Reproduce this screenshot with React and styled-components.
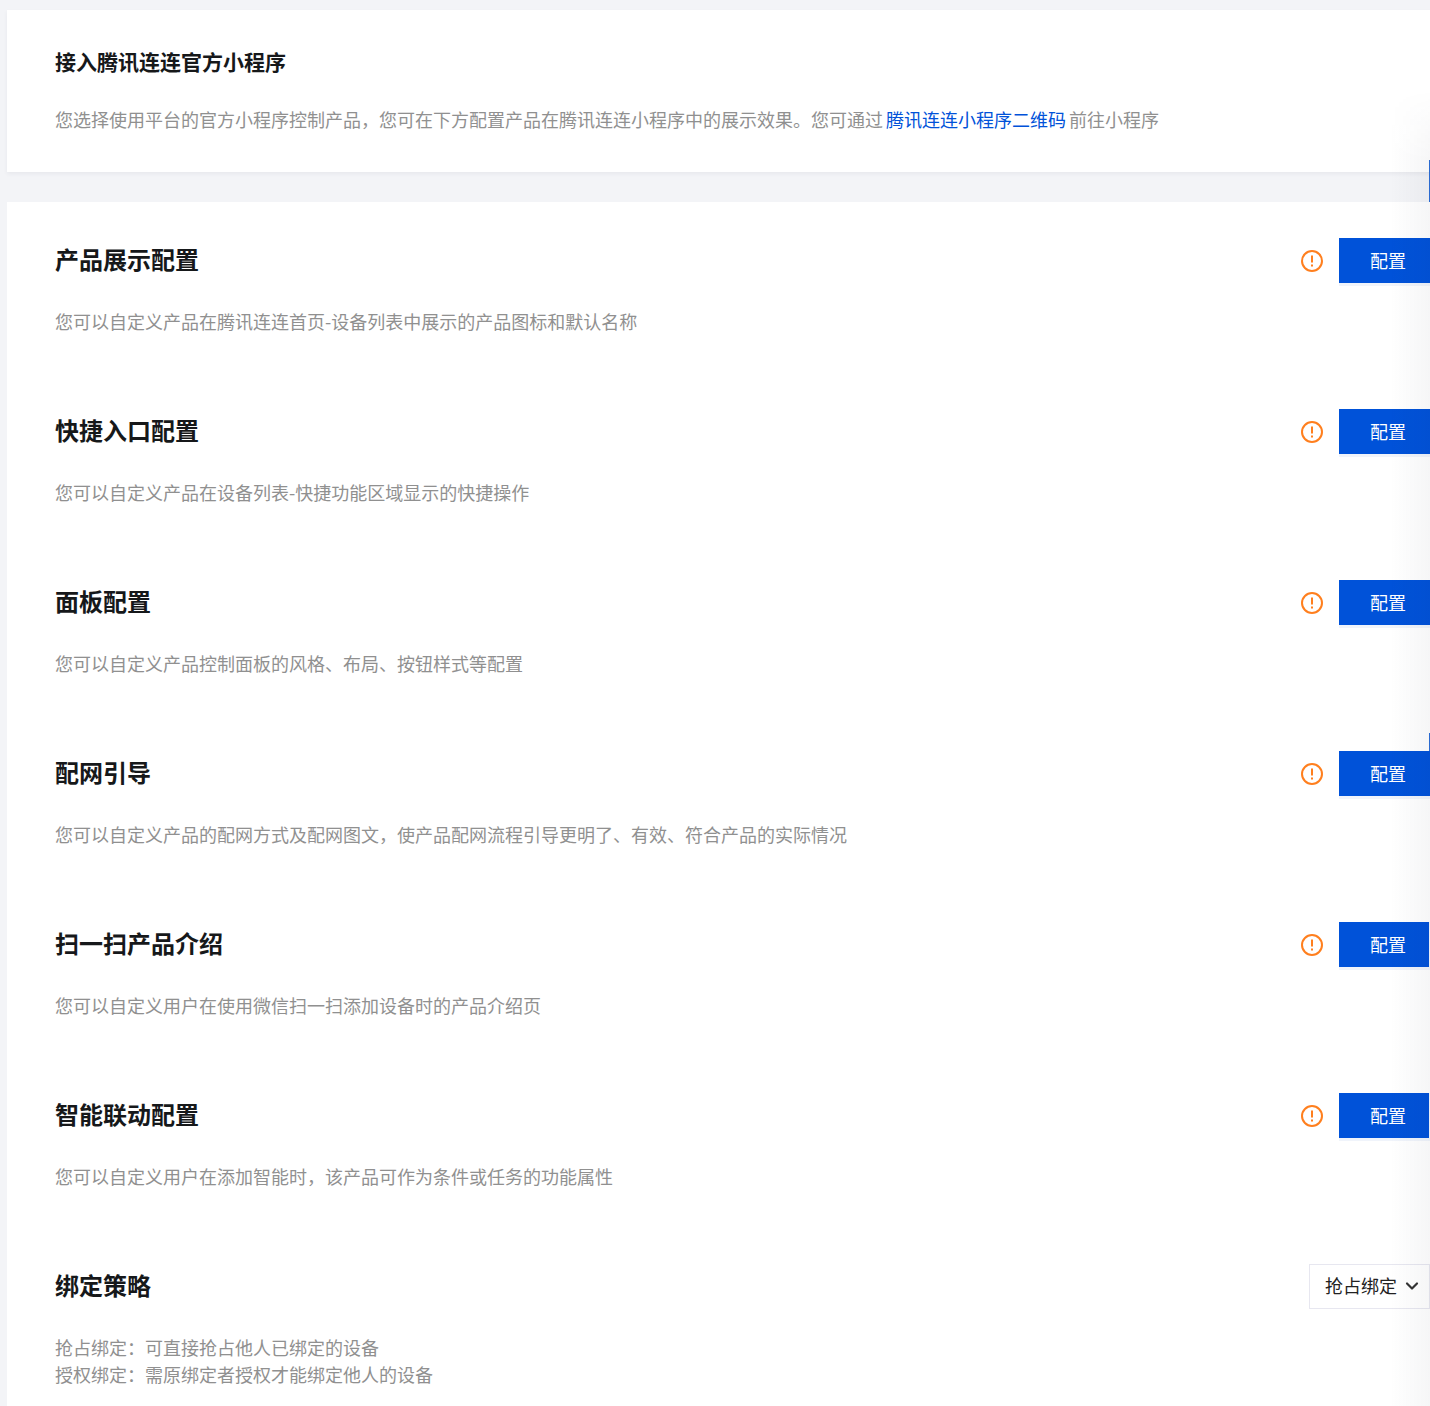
import styled, { createGlobalStyle } from "styled-components"
import { ChevronDown } from "lucide-react"

const GlobalStyle = createGlobalStyle`
    html, body {
        margin: 0;
        height: 1406px;
        overflow: hidden;
        background: #f3f4f7;
        font-family: "Noto Sans CJK SC", "Liberation Sans", sans-serif;
    }
`

const rows = [
    { title: "产品展示配置", desc: "您可以自定义产品在腾讯连连首页-设备列表中展示的产品图标和默认名称" },
    { title: "快捷入口配置", desc: "您可以自定义产品在设备列表-快捷功能区域显示的快捷操作" },
    { title: "面板配置", desc: "您可以自定义产品控制面板的风格、布局、按钮样式等配置" },
    { title: "配网引导", desc: "您可以自定义产品的配网方式及配网图文，使产品配网流程引导更明了、有效、符合产品的实际情况" },
    { title: "扫一扫产品介绍", desc: "您可以自定义用户在使用微信扫一扫添加设备时的产品介绍页" },
    { title: "智能联动配置", desc: "您可以自定义用户在添加智能时，该产品可作为条件或任务的功能属性" },
]

export default function App() {
    return (
        <Page>
            <GlobalStyle />
            <IntroCard>
                <IntroTitle>接入腾讯连连官方小程序</IntroTitle>
                <IntroDesc>
                    您选择使用平台的官方小程序控制产品，您可在下方配置产品在腾讯连连小程序中的展示效果。您可通过 <a href="#qr">腾讯连连小程序二维码</a> 前往小程序
                </IntroDesc>
            </IntroCard>

            <ConfigCard>
                {rows.map((row) => (
                    <Row key={row.title}>
                        <RowHead>
                            <RowTitle>{row.title}</RowTitle>
                            <Actions>
                                <WarnIcon />
                                <ConfigButton>配置</ConfigButton>
                            </Actions>
                        </RowHead>
                        <Desc>{row.desc}</Desc>
                    </Row>
                ))}
                <Row>
                    <RowHead>
                        <RowTitle>绑定策略</RowTitle>
                        <Select>
                            <SelectValue>抢占绑定</SelectValue>
                            <ChevronDown size={20} strokeWidth={2.6} color="#333" />
                        </Select>
                    </RowHead>
                    <Desc>
                        抢占绑定：可直接抢占他人已绑定的设备
                        <br />
                        授权绑定：需原绑定者授权才能绑定他人的设备
                    </Desc>
                </Row>
            </ConfigCard>

            <EdgeShade />
            <EdgeStrip $top={160} $height={42} $color="#2a6ad0" />
            <EdgeStrip $top={733} $height={18} $color="#2a6ad0" />
            <EdgeStrip $top={922} $height={45} $color="#e9edf5" />
            <EdgeStrip $top={1093} $height={45} $color="#e9edf5" />
        </Page>
    )
}

const WarnSvg = styled.svg`
    display: block;
    margin-top: 2px;
`

const WarnIcon = () => (
    <WarnSvg width="24" height="24" viewBox="0 0 24 24" fill="none">
        <circle cx="12" cy="12" r="10" stroke="#ff7f1e" strokeWidth="2" />
        <path d="M12 6.5v7" stroke="#ff7f1e" strokeWidth="2" />
        <path d="M12 15.5v2" stroke="#ff7f1e" strokeWidth="2" />
    </WarnSvg>
)

const Page = styled.div`
    position: relative;
    width: 1430px;
    height: 1406px;
    padding: 10px 0 0 7px;
    box-sizing: border-box;
    overflow: hidden;
`

const IntroCard = styled.section`
    width: 1440px;
    height: 162px;
    box-sizing: border-box;
    padding: 34px 48px 0;
    background: #fff;
    box-shadow: 0 2px 4px rgba(54, 58, 80, 0.06);
`

const IntroTitle = styled.h2`
    margin: 0 0 28px;
    font-size: 21px;
    line-height: 34px;
    font-weight: 700;
    color: #16181a;
`

const ConfigCard = styled.section`
    width: 1440px;
    margin-top: 30px;
    padding: 35px 0 0 48px;
    box-sizing: border-box;
    background: #fff;
    min-height: 1300px;
`

const Row = styled.div`
    height: 171px;
`

const RowHead = styled.div`
    width: 1375px;
    height: 46px;
    display: flex;
    align-items: center;
    justify-content: space-between;
    margin-bottom: 25px;
`

const RowTitle = styled.h3`
    margin: 0 0 2px;
    font-size: 24px;
    line-height: 44px;
    font-weight: 700;
    color: #16181a;
`

const Desc = styled.p`
    margin: 0;
    font-size: 18px;
    line-height: 27px;
    color: #909090;
`

const IntroDesc = styled(Desc)`
    word-spacing: -1px;

    a {
        color: #0052d9;
        text-decoration: none;
    }
`

const Actions = styled.div`
    display: flex;
    align-items: center;
    gap: 15px;
`

const ConfigButton = styled.button`
    width: 91px;
    height: 45px;
    padding: 0 0 0 31px;
    border: 0;
    background: #0052d9;
    box-shadow: 0 3px 0 #f0f4fb;
    color: #fff;
    font: inherit;
    font-size: 18px;
    text-align: left;
`

const Select = styled.div`
    width: 121px;
    height: 45px;
    box-sizing: border-box;
    display: flex;
    align-items: center;
    gap: 5px;
    padding-left: 15px;
    border: 1px solid #e7e7f0;
    background: #fff;
    font-size: 18px;
    color: #222;
`

const SelectValue = styled.span`
    line-height: 24px;
    margin-bottom: 2px;
`

const EdgeShade = styled.div`
    position: absolute;
    top: 90px;
    right: 0;
    bottom: 0;
    width: 40px;
    background: linear-gradient(to right, rgba(40, 44, 60, 0), rgba(40, 44, 60, 0.045));
    mask-image: linear-gradient(to bottom, transparent, black 70px);
    pointer-events: none;
`

const EdgeStrip = styled.div`
    position: absolute;
    top: ${({ $top }) => $top}px;
    right: 0;
    width: 1px;
    height: ${({ $height }) => $height}px;
    background: ${({ $color }) => $color};
`
